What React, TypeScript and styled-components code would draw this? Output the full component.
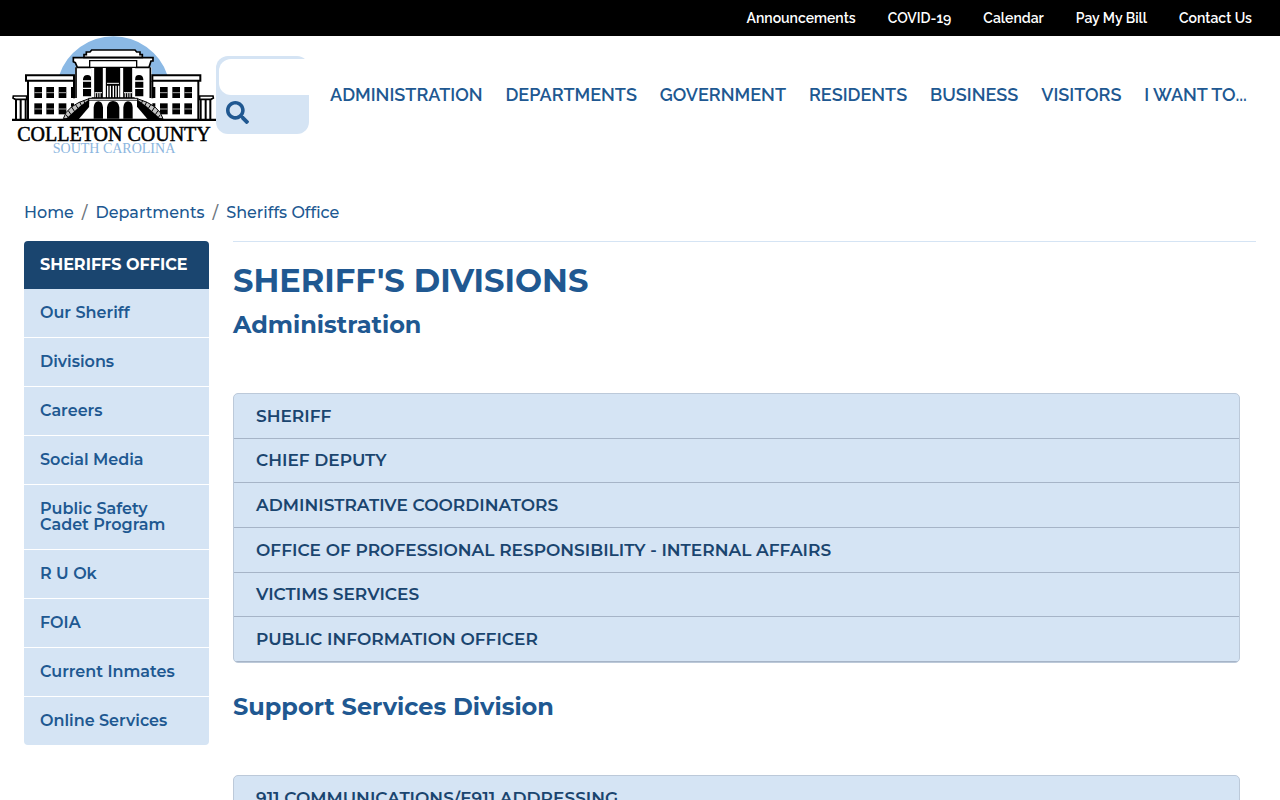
import React from "react";
import styled, { createGlobalStyle } from "styled-components";
import { FaSearch } from "react-icons/fa";

const colors = {
  navy: "#1a456f",
  link: "#205891",
  pale: "#d5e4f4",
};

const bodyFont = '"Montserrat", "Inter", sans-serif';
const menuFont = '"Raleway", "Lato", sans-serif';

const GlobalStyle = createGlobalStyle`
  *, *::before, *::after { box-sizing: border-box; }
  body {
    margin: 0;
    background: #fff;
    color: ${colors.link};
    font-family: ${bodyFont};
    font-size: 16px;
    line-height: 24px;
  }
  a { color: inherit; text-decoration: none; }
`;

const TopBar = styled.nav`
  display: flex;
  justify-content: flex-end;
  gap: 32px;
  padding: 6px 28px;
  background: #000;
`;

const TopLink = styled.a`
  color: #fff;
  font-family: ${menuFont};
  font-size: 14px;
  font-weight: 600;
  line-height: 24px;
`;

const Header = styled.header`
  display: flex;
  align-items: center;
  padding: 0 33px 0 12px;
`;

const LogoLink = styled.a`
  flex: none;
  display: block;

  svg { display: block; }
`;

const SearchForm = styled.form`
  flex: none;
  align-self: flex-start;
  width: 93px;
  margin: 20px 21px 0 0;
  padding: 3px 0 0 3px;
  border-radius: 12px;
  background: ${colors.pale};
`;

const SearchInput = styled.input`
  display: block;
  width: 100%;
  height: 36px;
  padding: 6px 12px;
  border: 0;
  border-radius: 12px 0 0 12px;
  background: #fff;
  font-family: ${bodyFont};
  font-size: 16px;
`;

const SearchButton = styled.button`
  display: block;
  padding: 6px 7px 10px;
  border: 0;
  background: none;
  color: ${colors.link};

  svg { display: block; }
`;

const MainNav = styled.nav`
  flex: 1;
  display: flex;
  justify-content: space-between;
`;

const MainLink = styled.a`
  font-family: ${menuFont};
  font-size: 18px;
  font-weight: 600;
  line-height: 24px;
  white-space: nowrap;
`;

const Breadcrumb = styled.ol`
  display: flex;
  gap: 8px;
  margin: 0;
  padding: 47px 24px 16px;
  list-style: none;
  font-weight: 500;
`;

const Crumb = styled.li`
  display: flex;
  gap: 8px;

  & + &::before {
    content: "/";
    color: #6c757d;
  }
`;

const Layout = styled.div`
  display: flex;
  align-items: flex-start;
  gap: 24px;
  padding: 0 24px 24px;
`;

const Sidebar = styled.nav`
  flex: none;
  width: 185px;
  overflow: hidden;
  border-radius: 4px;
  line-height: 16px;
`;

const SidebarTitle = styled.a`
  display: block;
  padding: 16px;
  background: ${colors.navy};
  color: #fff;
  font-weight: 700;
  white-space: nowrap;
`;

const SidebarLink = styled.a`
  display: block;
  padding: 16px;
  background: ${colors.pale};
  font-weight: 600;

  & + & { border-top: 1px solid #fff; }
`;

const Content = styled.main`
  flex: 1;
  min-width: 0;
  border-top: 1px solid ${colors.pale};
`;

const PageTitle = styled.h1`
  margin: 19px 0 0;
  font-size: 32px;
  font-weight: 700;
  line-height: 40px;
`;

const Division = styled.section`
  padding-right: 16px;

  & + & { margin-top: 28px; }
`;

const DivisionTitle = styled.h2`
  margin: 8px 0 52px;
  font-size: 24px;
  font-weight: 700;
  line-height: 32px;
`;

const Accordion = styled.div<{ $tall?: boolean }>`
  display: grid;
  grid-auto-rows: 1fr;
  min-height: ${(p) => (p.$tall ? "270px" : "0")};
  overflow: hidden;
  border: 1px solid #bcc9d9;
  border-radius: 5px;
  background: ${colors.pale};
`;

const AccordionButton = styled.button`
  padding: 0 22px;
  min-height: 44px;
  border: 0;
  border-bottom: 1px solid #a6b4c7;
  background: none;
  color: ${colors.navy};
  font-family: ${bodyFont};
  font-size: 17px;
  font-weight: 600;
  line-height: 24px;
  text-align: left;
`;

const topLinks = ["Announcements", "COVID-19", "Calendar", "Pay My Bill", "Contact Us"];
const mainLinks = ["ADMINISTRATION", "DEPARTMENTS", "GOVERNMENT", "RESIDENTS", "BUSINESS", "VISITORS", "I WANT TO..."];
const crumbs = ["Home", "Departments", "Sheriffs Office"];
const sideLinks = [
  "Our Sheriff", "Divisions", "Careers", "Social Media", "Public Safety Cadet Program",
  "R U Ok", "FOIA", "Current Inmates", "Online Services",
];
const divisions = [
  {
    title: "Administration",
    items: [
      "SHERIFF", "CHIEF DEPUTY", "ADMINISTRATIVE COORDINATORS",
      "OFFICE OF PROFESSIONAL RESPONSIBILITY - INTERNAL AFFAIRS",
      "VICTIMS SERVICES", "PUBLIC INFORMATION OFFICER",
    ],
  },
  { title: "Support Services Division", items: ["911 COMMUNICATIONS/E911 ADDRESSING"] },
];

// One half of the courthouse; the other half is its mirror image.
function Wing() {
  return (
    <g>
      <path d="M78 136H222V152H78z" fill="#fff" stroke="#000" strokeWidth="6" />
      <path d="M84 152V268M222 152V205" stroke="#000" strokeWidth="6" />
      <path d="M40 198H80V208H46L39 204z" fill="#fff" stroke="#000" strokeWidth="5" />
      <path d="M48 208V268M62 208V268M77 208V268" stroke="#000" strokeWidth="6" />
      {[171, 220].map((y) =>
        [103, 139, 176].map((x) => (
          <g key={`${x}-${y}`}>
            <rect x={x} y={y} width="23" height="33" />
            <path d={`M${x} ${y + 17}h23`} stroke="#a8a8a8" strokeWidth="3" />
          </g>
        )),
      )}
      <path d="M213 171h9v33h-9zM213 220h9v10h-9z" />
      <path d="M190 266Q200 226 267 206V222L208 266z" fill="#c4c4c4" stroke="#000" strokeWidth="3" />
      <path d="M198 254l6 8M205 242l8 12M215 231l9 14M226 223l8 12M239 216l6 12M251 211l4 10" stroke="#000" strokeWidth="3" />
      <path d="M196 268L240 229L268 208V230L236 268z" />
      <path d="M228 112V204" stroke="#000" strokeWidth="5" />
      <path d="M249 148Q250 135 262 135Q274 135 274 148V151H249zM249 155h25v18h-25zM249 177h25v22h-25z" />
    </g>
  );
}

function Logo() {
  return (
    <svg width="204" height="118" viewBox="0 0 204 118" role="img" aria-label="Colleton County South Carolina">
      <g transform="translate(-12 -6) scale(0.33333)" fill="#000" strokeLinejoin="miter">
        <path d="M178 135A171 171 0 0 1 502 135z" fill="#8bb9e5" />
        <path d="M80 155H600V266H80z" fill="#fff" />
        <path d="M225 112H455V266H225z" fill="#fff" />
        <Wing />
        <g transform="translate(679 0) scale(-1 1)"><Wing /></g>
        <path d="M275 114H404V204H275z" />
        <path d="M220 83H459V93H453L447 112H232L226 98L220 95z" fill="#fff" stroke="#000" strokeWidth="5" />
        <path d="M275 60H405L410 66H420V74H427V82H252V74H259V66H270z" fill="#fff" stroke="#000" strokeWidth="5" />
        <path d="M269 92H410V112H269z" fill="#fff" stroke="#000" strokeWidth="4" />
        <path d="M278 114V202M313 114V202M365 114V202M401 114V202" stroke="#fff" strokeWidth="9" />
        <path d="M284 188H306M372 188H396M321 160H357" stroke="#fff" strokeWidth="3" />
        <path d="M286 188V202M293 188V202M300 188V202M376 188V202M383 188V202M390 188V202" stroke="#bbb" strokeWidth="4" />
        <path d="M323 167V202M331 167V202M340 167V202M348 167V202M356 167V202" stroke="#fff" strokeWidth="4" />
        <path d="M266 205H413V211H266z" fill="#fff" stroke="#000" strokeWidth="3" />
        <path d="M268 212H411V266H268z" fill="#fff" />
        <path d="M281 266V232Q283 214 295 214Q307 214 309 232V266zM321 266V232Q324 213 339 213Q355 213 358 232V266zM370 266V232Q372 214 384 214Q397 214 398 232V266z" />
        <path d="M36 266H648V273H36z" />
      </g>
      <text x="102" y="105" textAnchor="middle" fontFamily="Liberation Serif, serif" fontSize="20" fill="#000" stroke="#000" strokeWidth="0.5">COLLETON COUNTY</text>
      <text x="102" y="117" textAnchor="middle" fontFamily="Liberation Serif, serif" fontSize="14" fill="#8bb5de">SOUTH CAROLINA</text>
    </svg>
  );
}

export default function App() {
  return (
    <>
      <GlobalStyle />
      <TopBar aria-label="Quick links">
        {topLinks.map((t) => <TopLink key={t} href="#">{t}</TopLink>)}
      </TopBar>
      <Header>
        <LogoLink href="#"><Logo /></LogoLink>
        <SearchForm role="search">
          <SearchInput type="search" aria-label="Search" />
          <SearchButton type="button" aria-label="Submit search"><FaSearch size={23} /></SearchButton>
        </SearchForm>
        <MainNav aria-label="Main">
          {mainLinks.map((t) => <MainLink key={t} href="#">{t}</MainLink>)}
        </MainNav>
      </Header>
      <Breadcrumb aria-label="Breadcrumb">
        {crumbs.map((t) => <Crumb key={t}><a href="#">{t}</a></Crumb>)}
      </Breadcrumb>
      <Layout>
        <Sidebar aria-label="Sheriffs Office">
          <SidebarTitle href="#">SHERIFFS OFFICE</SidebarTitle>
          {sideLinks.map((t) => <SidebarLink key={t} href="#">{t}</SidebarLink>)}
        </Sidebar>
        <Content>
          <PageTitle>SHERIFF'S DIVISIONS</PageTitle>
          {divisions.map((d) => (
            <Division key={d.title}>
              <DivisionTitle>{d.title}</DivisionTitle>
              <Accordion $tall={d.items.length > 1}>
                {d.items.map((t) => <AccordionButton key={t} type="button">{t}</AccordionButton>)}
              </Accordion>
            </Division>
          ))}
        </Content>
      </Layout>
    </>
  );
}
